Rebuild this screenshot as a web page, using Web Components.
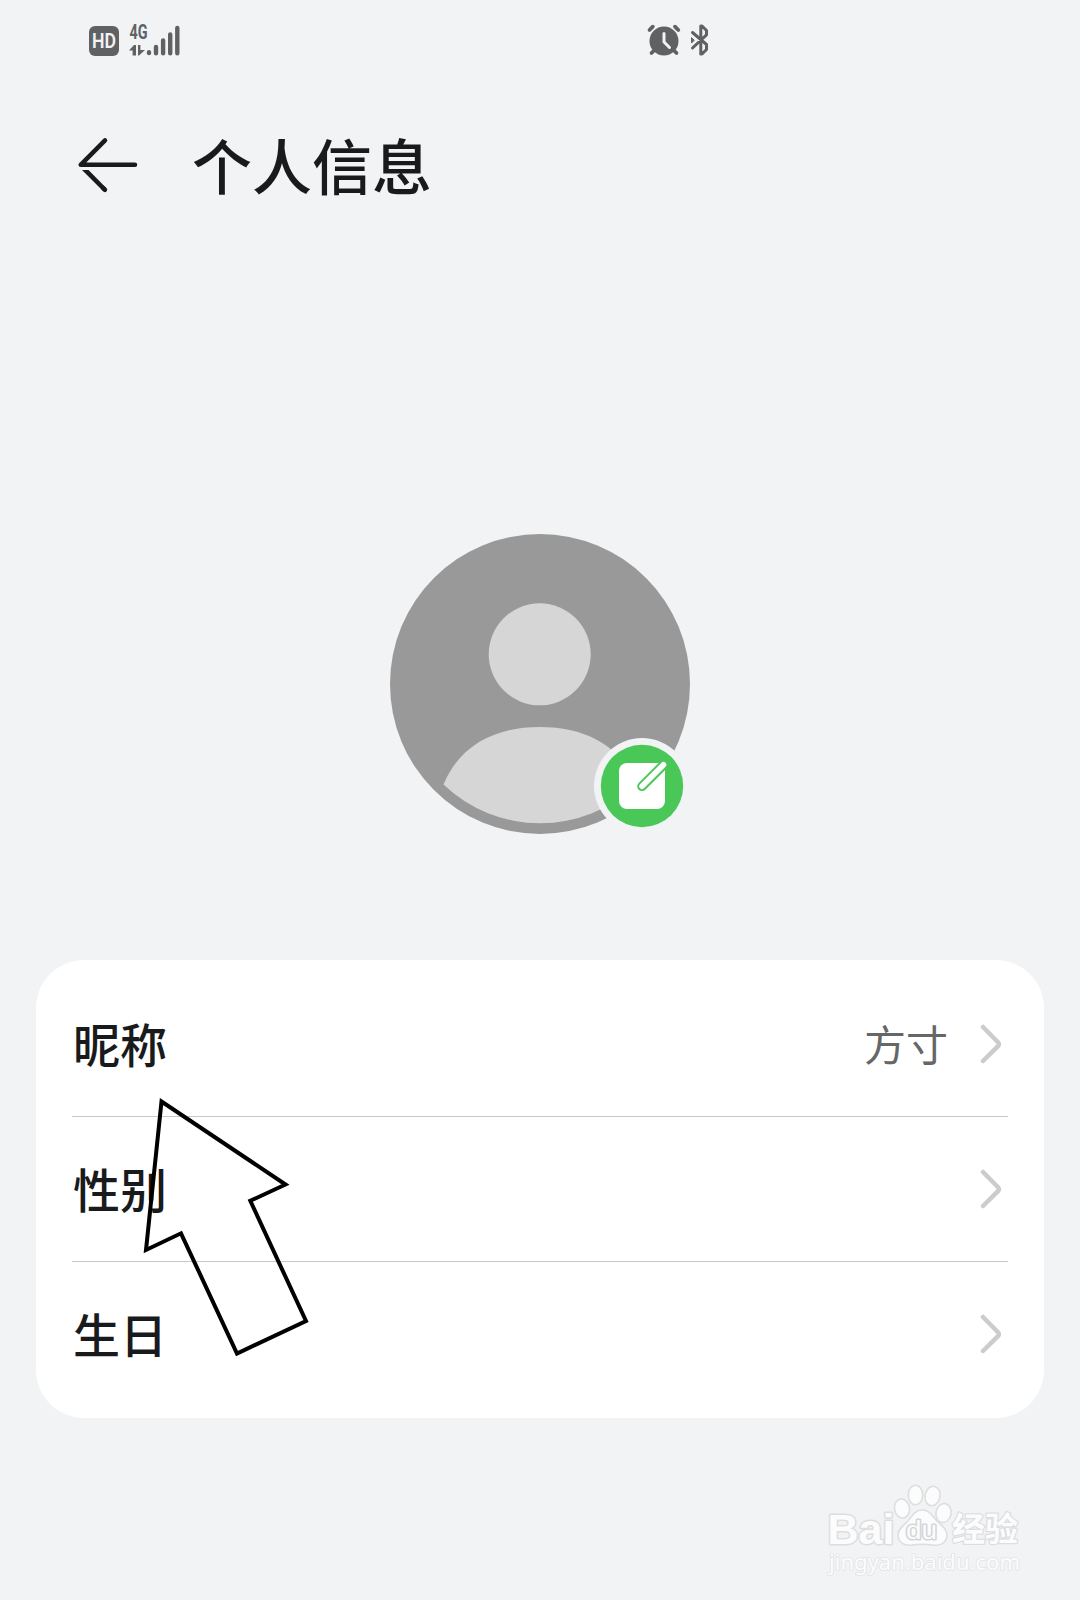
<!DOCTYPE html>
<html lang="zh-CN">
<head>
<meta charset="utf-8">
<title>个人信息</title>
<style>
body {
    margin: 0;
    background: #f1f3f5;
    font-family: "Noto Sans CJK SC", sans-serif;
    color: #191a1c;
}
</style>
</head>
<body>
<profile-page>
    <status-bar slot="status"></status-bar>
    <page-header slot="header">个人信息</page-header>
    <user-avatar></user-avatar>
    <info-card>
        <info-row>昵称<span slot="value">方寸</span></info-row>
        <info-row>性别</info-row>
        <info-row>生日</info-row>
    </info-card>
    <pointer-arrow slot="overlay"></pointer-arrow>
    <water-mark slot="overlay"></water-mark>
</profile-page>

<script>
function define(name, html) {
    customElements.define(name, class extends HTMLElement {
        constructor() {
            super();
            this.attachShadow({ mode: 'open' }).innerHTML = html;
        }
    });
}

define('profile-page', `
<style>
:host {
    position: relative;
    display: flex;
    flex-direction: column;
    width: 1080px;
    height: 1600px;
    overflow: hidden;
}
main {
    display: flex;
    flex-direction: column;
    align-items: center;
    gap: 126px;
    padding-top: 314px;
}
</style>
<slot name=status></slot>
<slot name=header></slot>
<main><slot></slot></main>
<slot name=overlay></slot>
`);

define('status-bar', `
<style>
:host {
    display: flex;
    align-items: flex-start;
    height: 56px;
    padding: 24px 0 0 89px;
    box-sizing: border-box;
    color: #5f6163;
    font-family: Roboto, sans-serif;
}
.hd {
    width: 30px;
    height: 30px;
    margin-top: 2px;
    border-radius: 6px;
    background: currentColor;
}
.hd svg text { fill: #f1f3f5; }
.signal { margin-left: 10px; }
.icons {
    display: flex;
    gap: 9px;
    margin-left: 466px;
}
svg {
    display: block;
    overflow: visible;
}
</style>
<div class=hd>
    <svg width="30" height="30" viewBox="0 0 30 30">
        <text x="3" y="22" font-size="19.500" font-weight="600" textLength="24" lengthAdjust="spacingAndGlyphs">HD</text>
    </svg>
</div>
<svg class=signal width="52" height="32" viewBox="0 0 52 32" fill="currentColor">
    <text x="0.500" y="15" font-size="19.500" font-weight="700" textLength="18" lengthAdjust="spacingAndGlyphs">4G</text>
    <path d="M0 26.500l5-5.500h2v10.500H3.600v-5zM9 21h2.400v5H16l-6 5.500H9z"/>
    <g stroke="currentColor" stroke-width="4.400" stroke-linecap="round">
        <path d="M20 28.300v.8M27 23v6.300M34.100 16.500v12.800M41.200 10.500v18.800M48.300 4v25.300"/>
    </g>
</svg>
<div class=icons>
    <svg width="33" height="32" viewBox="0 0 33 32">
        <circle cx="17" cy="17" r="14.500" fill="currentColor"/>
        <g fill="none" stroke="currentColor" stroke-width="3.800" stroke-linecap="round">
            <path d="M2.500 6l3.300-3.300M28 2.700L31.300 6M4.500 29l3-3M26.500 26l3 3"/>
        </g>
        <path d="M17 9.500V18l5.500 5.500" fill="none" stroke="#f1f3f5" stroke-width="3" stroke-linecap="round"/>
    </svg>
    <svg width="20" height="33" viewBox="0 0 20 33" fill="none" stroke="currentColor" stroke-width="3" stroke-linejoin="round" stroke-linecap="round">
        <path d="M3.500 8.500L17.500 20.500v5L13 30H11.800V19M11.800 14V2H13l4.500 4.500v4.300L3.500 24"/>
        <path d="M2.500 14v5L5 16.500z" fill="currentColor" stroke-width="1"/>
    </svg>
</div>
`);

define('page-header', `
<style>
:host {
    display: flex;
    align-items: flex-start;
    height: 88px;
    padding: 76px 0 0 76px;
}
h1 {
    margin: -12px 0 0 56px;
    font-size: 60px;
    line-height: 88px;
    font-weight: 500;
}
svg { overflow: visible; }
</style>
<svg width="60" height="88" viewBox="0 0 60 88" fill="none" stroke="currentColor" stroke-width="4.500" stroke-linecap="round">
    <path d="M59 32.800H4.700L29 8.300" stroke-linejoin="round"/>
    <path d="M27 55.900l2 1.900"/>
    <path d="M6 37.900h6.500L30.500 56.200l-3 3.200z" fill="currentColor" stroke="none"/>
</svg>
<h1><slot></slot></h1>
`);

define('user-avatar', `
<style>
:host {
    position: relative;
    display: block;
    width: 300px;
    height: 300px;
}
svg { display: block; }
edit-badge {
    position: absolute;
    left: 204px;
    top: 203.500px;
}
</style>
<svg width="300" height="300" viewBox="0 0 300 300">
    <circle cx="150" cy="150" r="150" fill="#999"/>
    <g fill="#d6d6d6">
        <circle cx="149.700" cy="120.300" r="51"/>
        <path d="M53.500 250.500C70 211 105 193 150 193s80 18 96.500 57.500A139.300 139.300 0 0 1 53.500 250.500z"/>
    </g>
</svg>
<edit-badge></edit-badge>
`);

define('edit-badge', `
<style>
:host { display: block; }
svg { display: block; }
</style>
<svg width="96" height="96" viewBox="0 0 96 96">
    <circle cx="48" cy="48" r="48" fill="#f1f3f5"/>
    <circle cx="48" cy="48" r="41.200" fill="#49c757"/>
    <rect x="25" y="25" width="46" height="46" rx="8" fill="#fff"/>
    <path d="M48 48.300L73.500 22.800" stroke="#49c757" stroke-width="9.500" stroke-linecap="round"/>
    <path d="M48 48.300L69.500 26.800" stroke="#fff" stroke-width="5.600" stroke-linecap="round"/>
</svg>
`);

define('info-card', `
<style>
:host {
    display: flex;
    flex-direction: column;
    width: 1008px;
    height: 458px;
    padding: 12px 36px;
    box-sizing: border-box;
    border-radius: 48px;
    background: #fff;
}
::slotted(info-row:not(:last-child)) {
    border-bottom: 1px solid #c8c8c8;
}
</style>
<slot></slot>
`);

define('info-row', `
<style>
:host {
    display: flex;
    align-items: center;
    height: 144px;
    padding: 0 6px 0 1px;
}
.label {
    flex: 1;
    padding-bottom: 2px;
    font-size: 47px;
    line-height: 66px;
    font-weight: 500;
}
.value {
    margin-right: 32px;
    padding-bottom: 2px;
    color: #666;
    font-size: 42px;
    line-height: 60px;
}
svg { display: block; }
</style>
<div class=label><slot></slot></div>
<div class=value><slot name=value></slot></div>
<svg width="22" height="40" viewBox="0 0 22 40" fill="none" stroke="#ccc" stroke-width="4.500" stroke-linecap="round">
    <path d="M3 3L18 18.200q1.800 2 0 4L3 37"/>
</svg>
`);

define('pointer-arrow', `
<style>
:host {
    position: absolute;
    left: 140px;
    top: 1095px;
}
svg { display: block; }
</style>
<svg width="174" height="265" viewBox="140 1095 174 265" fill="none" stroke="#000" stroke-width="4">
    <path d="M161.500 1101.500L285.500 1184.500 250.300 1200.800 306 1321 237 1353.500 181 1233.300 146 1250z"/>
</svg>
`);

define('water-mark', `
<style>
:host {
    position: absolute;
    left: 820px;
    top: 1476px;
}
svg { display: block; }
text {
    paint-order: stroke;
    stroke-linejoin: round;
}
</style>
<svg width="220" height="108" viewBox="820 1476 220 108" fill="#fcfcfd" stroke="#dcdee0" stroke-width="1.600">
    <ellipse cx="902" cy="1508.500" rx="7.500" ry="9.600" transform="rotate(-10 902 1508.500)"/>
    <ellipse cx="915.500" cy="1495" rx="7.200" ry="9.800"/>
    <ellipse cx="932.500" cy="1496" rx="7.500" ry="9.800" transform="rotate(12 932.500 1496)"/>
    <ellipse cx="943.500" cy="1513" rx="7.500" ry="9.600" transform="rotate(12 943.500 1513)"/>
    <path d="M922 1510c8 0 10 6 15 11 6 6 10 8 10 15-1 8-8 10-14 9-7-1-15-1-21 0-7 1-14-2-14-10 0-6 5-9 10-14 4-5 7-11 14-11z"/>
    <g font-family="'Liberation Sans', sans-serif" font-weight="700">
        <text x="827.500" y="1543.500" font-size="43" textLength="67" lengthAdjust="spacingAndGlyphs" stroke-width="3">Bai</text>
        <text x="906" y="1539" font-size="26" textLength="31" lengthAdjust="spacingAndGlyphs" font-weight="400" stroke="#d3d5d7" stroke-width="3">du</text>
    </g>
    <text x="952" y="1541" font-family="'Noto Sans CJK SC', sans-serif" font-weight="700" font-size="33" stroke-width="2.500">经验</text>
    <text x="829" y="1570" font-family="'Noto Sans', sans-serif" font-size="22" textLength="191" lengthAdjust="spacingAndGlyphs" stroke="#e2e4e6">jingyan.baidu.com</text>
</svg>
`);
</script>
</body>
</html>
